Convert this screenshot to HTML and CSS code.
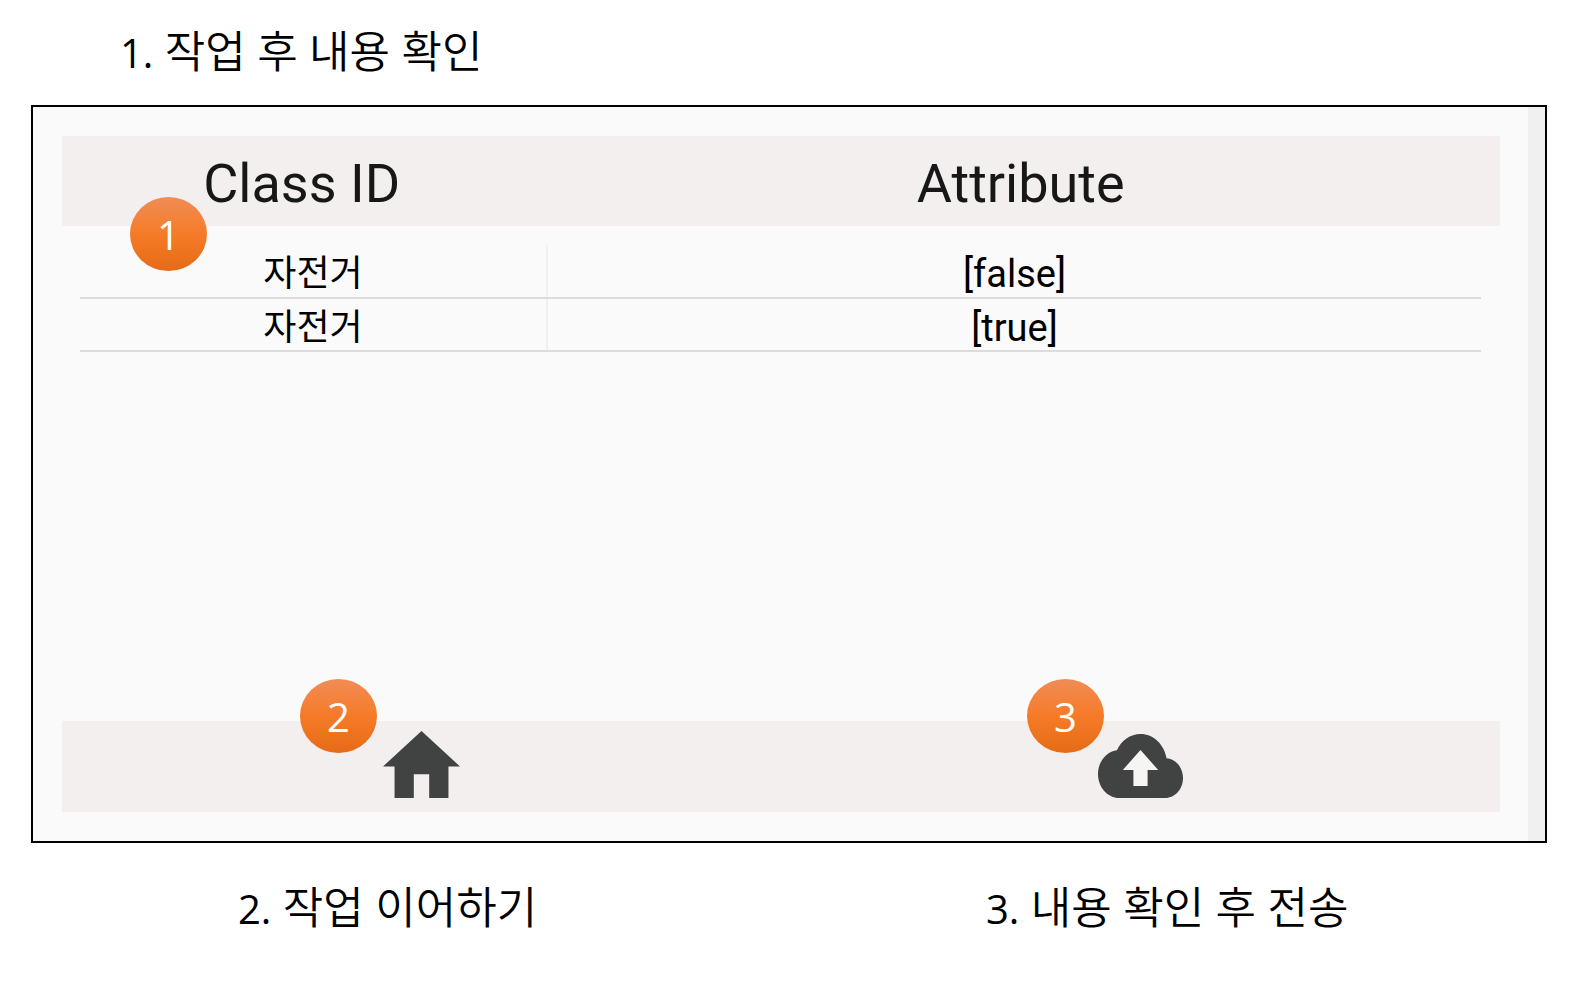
FILE: index.html
```
<!DOCTYPE html>
<html lang="ko">
<head>
<meta charset="utf-8">
<title>작업 내용 확인</title>
<link rel="stylesheet" href="styles.css">
</head>
<body>
<main class="guide">
  <h1 class="caption caption-top"><span class="number">1.</span> 작업 후 내용 확인</h1>
  <section class="panel">
    <div class="screen">
      <div class="band heading">
        <span id="h-class">Class ID</span>
        <span id="h-attr">Attribute</span>
      </div>
      <table class="rows" aria-labelledby="h-class h-attr">
        <tbody>
          <tr><td class="cell-class">자전거</td><td>[false]</td></tr>
          <tr><td class="cell-class">자전거</td><td>[true]</td></tr>
        </tbody>
      </table>
      <div class="band actions">
        <button class="action" type="button" aria-label="작업 이어하기">
          <svg class="icon-home" viewBox="2 3 20 17" preserveAspectRatio="none" aria-hidden="true"><path d="M10 20v-6h4v6h5v-8h3L12 3 2 12h3v8z"/></svg>
          <span class="badge badge-home">2</span>
        </button>
        <button class="action" type="button" aria-label="전송">
          <svg class="icon-cloud" viewBox="0 4 24 16" preserveAspectRatio="none" aria-hidden="true"><path class="arrow" d="M6 7h12v11H6z"/><path d="M19.35 10.04C18.67 6.59 15.64 4 12 4 9.11 4 6.6 5.64 5.35 8.04 2.34 8.36 0 10.91 0 14c0 3.31 2.69 6 6 6h13c2.76 0 5-2.24 5-5 0-2.64-2.05-4.78-4.65-4.96zM14 13v4h-4v-4H7l5-5 5 5h-3z"/></svg>
          <span class="badge badge-cloud">3</span>
        </button>
      </div>
      <span class="badge badge-list">1</span>
    </div>
  </section>
  <div class="notes">
    <p class="caption"><span class="number">2.</span> 작업 이어하기</p>
    <p class="caption"><span class="number">3.</span> 내용 확인 후 전송</p>
  </div>
</main>
</body>
</html>
```
FILE: styles.css
```
* { box-sizing: border-box; }
body { margin: 0; background: #fff; color: #000; }
.guide { padding: 21px 40px 0 31px; }
.caption {
  margin: 0;
  font: 350 44px/60px "Open Sans", "Noto Sans CJK KR", sans-serif;
}
.number { font-size: 40px; font-weight: 400; line-height: 40px; }
.caption-top { padding-left: 89px; margin-bottom: 24px; }
.panel {
  border: 2px solid #000;
  background: #f0f0f0;
  padding-right: 17px;
}
.screen {
  position: relative;
  display: flex;
  flex-direction: column;
  min-height: 734px;
  padding: 29px 28px 29px 29px;
  background: #fafafa;
}
.band { background: #f3efee; display: grid; }
.heading {
  grid-template-columns: 1fr 2fr;
  padding: 16px 0 10px;
  font: 54px/64px Roboto, sans-serif;
  color: #161716;
  text-align: center;
}
.rows {
  table-layout: fixed;
  border-collapse: collapse;
  margin: 19px 19px 0 18px;
  font: 38px/43px Roboto, "Noto Sans CJK KR", sans-serif;
  text-align: center;
}
.rows td { padding: 7px 0 0; height: 53px; border-bottom: 2px solid #dcdcdc; }
.rows .cell-class { width: 33.333%; border-right: 2px solid #f0f0f0; font-size: 36px; }
.actions {
  grid-template-columns: 1fr 1fr;
  justify-items: center;
  align-items: end;
  height: 91px;
  margin-top: auto;
  padding-bottom: 14px;
}
.action {
  position: relative;
  display: flex;
  padding: 0;
  border: 0;
  background: none;
  cursor: pointer;
}
.action svg { fill: #414342; }
.icon-home { width: 77px; height: 67px; }
.icon-cloud { width: 85px; height: 64px; }
.icon-cloud .arrow { fill: #f7f5f4; }
.badge {
  position: absolute;
  width: 77px;
  height: 74px;
  border-radius: 50%;
  background: linear-gradient(#f18c55, #f67b28 50%, #e56b17);
  color: #fff;
  font: 400 40px/76px "Open Sans", sans-serif;
  text-align: center;
}
.badge-home { left: -83px; top: -52px; }
.badge-cloud { left: -71px; top: -55px; }
.badge-list { left: 97px; top: 90px; }
.notes {
  display: grid;
  grid-template-columns: 748fr 768fr;
  margin-top: 34px;
}
.notes .caption { padding-left: 207px; }
```
